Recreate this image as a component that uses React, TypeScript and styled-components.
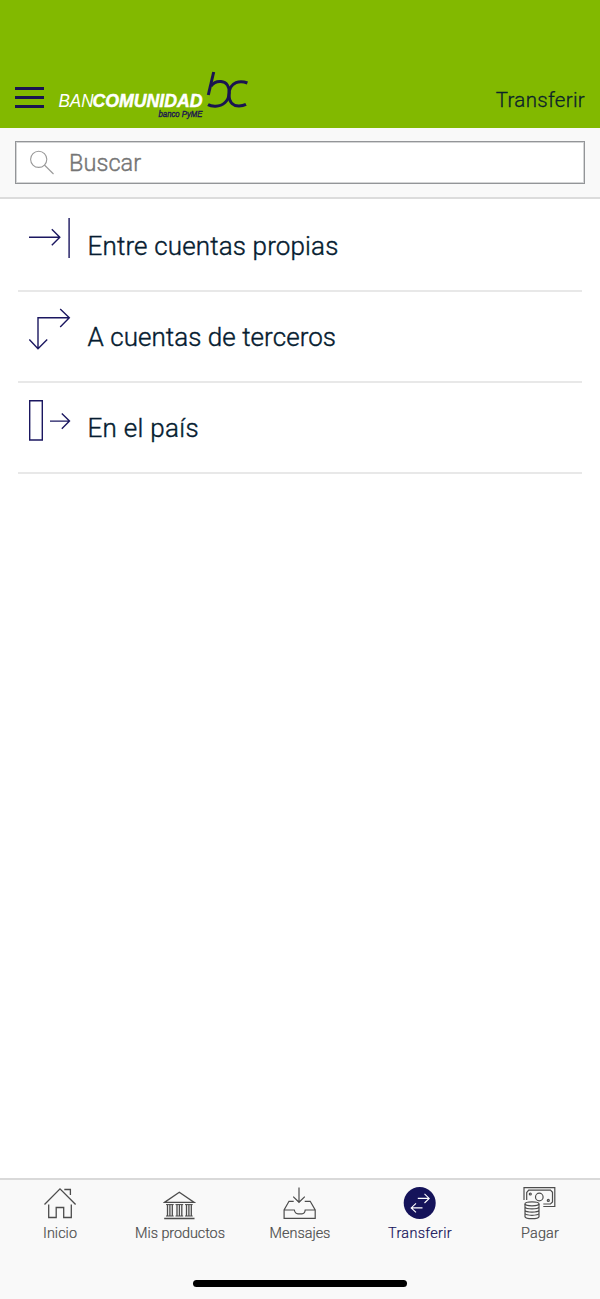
import React from 'react';
import styled, { createGlobalStyle } from 'styled-components';

const GlobalStyle = createGlobalStyle`
  * { box-sizing: border-box; }
  body {
    margin: 0;
    background: #fff;
    font-family: Roboto, "Liberation Sans", sans-serif;
    font-weight: 300;
  }
`;

const Screen = styled.div`
  display: flex;
  flex-direction: column;
  width: 600px;
  height: 1299px;
  background: #fff;
  overflow: hidden;
`;

const Header = styled.header`
  display: flex;
  justify-content: space-between;
  align-items: flex-end;
  height: 127.5px;
  padding: 0 15px 0 14px;
  background: #82b900;
`;

const Brand = styled.div`
  display: flex;
  align-items: flex-end;
  gap: 12px;
`;

const MenuButton = styled.button`
  display: flex;
  flex-direction: column;
  justify-content: space-between;
  width: 30px;
  height: 21px;
  margin: 0 0 19.5px;
  padding: 0 0 0 0.5px;
  border: 0;
  background: none;
`;

const MenuLine = styled.span`
  align-self: stretch;
  height: 3px;
  background: #1a1450;
`;

const Logo = styled.svg`
  display: block;
  margin-bottom: 5px;
`;

const Title = styled.h1`
  margin: 0 0 16px;
  color: #0b232b;
  font-size: 20.5px;
  font-weight: 300;
  line-height: 24px;
  letter-spacing: 0.3px;
  -webkit-text-stroke: 0.3px currentColor;
`;

const SearchArea = styled.div`
  height: 71.5px;
  padding: 13.5px 15px 0;
  background: #f9f9f9;
  border-bottom: 2px solid #dcdcdc;
`;

const SearchBox = styled.label`
  display: flex;
  align-items: center;
  gap: 14px;
  height: 43px;
  padding-left: 13px;
  background: #fff;
  border: 1px solid #939598;
  box-shadow: inset 0 0 0 1px rgba(147, 149, 152, 0.4);
`;

const SearchInput = styled.input`
  flex: 1;
  min-width: 0;
  padding: 1px 0 0;
  border: 0;
  outline: 0;
  background: transparent;
  font: 300 23.5px/30px Roboto, "Liberation Sans", sans-serif;
  letter-spacing: 0.05px;
  -webkit-text-stroke: 0.4px #757575;
  &::placeholder { color: #757575; opacity: 1; }
`;

const List = styled.ul`
  flex: 1;
  margin: 0;
  padding: 1.5px 18px 0;
  list-style: none;
`;

const Item = styled.li`
  display: flex;
  height: 91.1px;
  padding: 15.5px 0 0 10px;
  border-bottom: 2px solid #e8e8e8;
`;

const ItemLabel = styled.span<{ $spacing: number }>`
  margin: 15px 0 0 15.5px;
  color: #061c30;
  font-size: 26px;
  line-height: 30px;
  letter-spacing: ${(p) => p.$spacing}px;
  white-space: nowrap;
  -webkit-text-stroke: 0.4px currentColor;
`;

const LineIcon = styled.svg`
  display: block;
  flex: none;
  fill: none;
  stroke: currentColor;
`;

const TabBar = styled.nav`
  display: grid;
  grid-template-columns: repeat(5, 1fr);
  height: 83px;
  background: #f9f9f9;
  border-top: 2px solid #d9d9d9;
`;

const Tab = styled.a<{ $active?: boolean }>`
  display: flex;
  flex-direction: column;
  align-items: center;
  padding-top: 6px;
  color: ${(p) => (p.$active ? '#15135a' : '#4d4d4d')};
`;

const TabLabel = styled.span<{ $spacing: number }>`
  margin-top: 4px;
  font-size: 14.4px;
  line-height: 20px;
  letter-spacing: ${(p) => p.$spacing}px;
  white-space: nowrap;
  -webkit-text-stroke: 0.2px currentColor;
`;

const HomeArea = styled.div`
  display: flex;
  justify-content: center;
  height: 38px;
  padding-top: 19px;
  background: #f9f9f9;
`;

const HomeBar = styled.div`
  width: 214px;
  height: 7px;
  border-radius: 4px;
  background: #000;
`;

const BrandLogo = () => (
  <Logo width="194" height="54" viewBox="56 69 194 54" role="img" aria-label="Bancomunidad">
    <g fontFamily="Liberation Sans, sans-serif" fontStyle="italic">
      <text x="58.5" y="107.2" fontSize="18.2" fontWeight="400" fill="#fff" textLength="35" lengthAdjust="spacingAndGlyphs">BAN</text>
      <text x="92.5" y="107.2" fontSize="18.2" fontWeight="700" fill="#fff" stroke="#fff" strokeWidth="0.5" textLength="110" lengthAdjust="spacingAndGlyphs">COMUNIDAD</text>
      <text x="158.5" y="116.9" fontSize="8.4" fontWeight="400" fill="#1a1450" stroke="#1a1450" strokeWidth="0.35" textLength="44" lengthAdjust="spacingAndGlyphs">banco PyME</text>
    </g>
    <g fill="none" stroke="#1a1450" strokeWidth="3">
      <path d="M213.7 72 L208.3 95" />
      <path d="M211 86 C214 82 218 81.2 221 81.5 C227 82 229.4 87 229.2 93 C228.9 101 223 106 215.5 106.2 C212 106.3 209.8 105.7 208 104.6" />
      <path d="M247.4 83 C243.5 81.4 239.5 81.2 236 82.6 C231 84.8 228.8 90 228.9 95 C229.2 103.2 234 106.2 239 106.1 C242 106 244 105.4 246 104.4" />
    </g>
  </Logo>
);

const SearchIcon = () => (
  <LineIcon width="26" height="26" viewBox="0 0 26 26" color="#999" strokeWidth="1.1">
    <circle cx="9.7" cy="9.3" r="8.1" />
    <path d="M15.4 15 L24.5 24" />
  </LineIcon>
);

const OwnIcon = () => (
  <LineIcon width="44" height="44" viewBox="28 216 44 44" color="#1b1760" strokeWidth="1.4">
    <path d="M29 237.3H59.5M51.8 229.2L59.8 237.3L51.8 245.3M69.1 218V258" />
  </LineIcon>
);

const ThirdIcon = () => (
  <LineIcon width="44" height="44" viewBox="28 307.3 44 44" color="#1b1760" strokeWidth="1.4">
    <path d="M38 348.5V318H69M60.2 309.3L69.3 318L60.2 327.2M29.3 339.8L38 349L47.2 339.8" />
  </LineIcon>
);

const CountryIcon = () => (
  <LineIcon width="44" height="44" viewBox="28 398.2 44 44" color="#1b1760" strokeWidth="1.4">
    <path d="M29.7 401H42.3V440.2H29.7ZM50 421.3H69.3M61.8 413.8L69.5 421.3L61.8 429" />
  </LineIcon>
);

const HomeIcon = () => (
  <LineIcon width="34" height="34" viewBox="43 1186 34 34" strokeWidth="1.3">
    <path d="M44.5 1204.5L60 1188.8L75.6 1204.5M64.3 1189.5H70.4V1195M48.7 1204.5V1217.5H56.2V1207.5H63.7V1217.5H71.3V1204.5" />
  </LineIcon>
);

const BankIcon = () => (
  <LineIcon width="34" height="34" viewBox="163 1186 34 34" strokeWidth="1.3">
    <path d="M164.5 1202.4L179.3 1192.2L194.2 1202.4ZM164.2 1218.5H194.5" />
    <path d="M166 1204.6H173.7M175.5 1204.6H183.2M185 1204.6H192.7M166 1216H173.7M175.5 1216H183.2M185 1216H192.7" strokeWidth="1" />
    <path d="M167.5 1204.6V1216M169.9 1204.6V1216M172.3 1204.6V1216M177 1204.6V1216M179.4 1204.6V1216M181.8 1204.6V1216M186.5 1204.6V1216M188.9 1204.6V1216M191.3 1204.6V1216" strokeWidth="1.3" />
  </LineIcon>
);

const InboxIcon = () => (
  <LineIcon width="34" height="34" viewBox="283 1186 34 34" strokeWidth="1.2">
    <path d="M299 1187.5V1202M293.2 1196.6L299 1202.3L304.8 1196.6M293.7 1201.3H289L284.1 1210V1218.4H315.2V1210L310.2 1201.3H304.7M284.1 1210H294.3C295 1213.3 296 1213.8 298 1213.8H302C304 1213.8 304.8 1213.2 305.2 1210H315.2" />
  </LineIcon>
);

const TransferIcon = () => (
  <LineIcon width="34" height="34" viewBox="403 1186 34 34">
    <circle cx="419.7" cy="1203" r="16" fill="#15135a" stroke="none" />
    <path d="M417.8 1198.4H429M424.5 1193.8L429.2 1198.4L424.5 1203M422.5 1207.9H411.3M416 1203.3L411.2 1207.9L416 1212.4" stroke="#fff" strokeWidth="1.1" />
  </LineIcon>
);

const PayIcon = () => (
  <LineIcon width="34" height="34" viewBox="523 1186 34 34" strokeWidth="1.2">
    <path d="M524 1200V1187.7H554.8V1206.5H543.3M526.7 1200V1192.5L528.7 1190.2H550.5L552.5 1192.3V1202L550.5 1204H543.3" />
    <circle cx="539.3" cy="1197" r="3.8" />
    <circle cx="530.3" cy="1194" r="1" />
    <circle cx="548.3" cy="1200.4" r="1" />
    <ellipse cx="532" cy="1203.8" rx="7" ry="2" />
    <path d="M525 1204V1216.7C525.8 1219.3 538.2 1219.3 539 1216.7V1204M525 1207C526 1209.5 538 1209.5 539 1207M525 1210.2C526 1212.7 538 1212.7 539 1210.2M525 1213.4C526 1215.9 538 1215.9 539 1213.4" />
  </LineIcon>
);

const options = [
  { label: 'Entre cuentas propias', Icon: OwnIcon, spacing: 0.15 },
  { label: 'A cuentas de terceros', Icon: ThirdIcon, spacing: 0.05 },
  { label: 'En el país', Icon: CountryIcon, spacing: 0.3 },
];

const tabs = [
  { label: 'Inicio', Icon: HomeIcon, spacing: 0.05 },
  { label: 'Mis productos', Icon: BankIcon, spacing: -0.05 },
  { label: 'Mensajes', Icon: InboxIcon, spacing: 0 },
  { label: 'Transferir', Icon: TransferIcon, active: true, spacing: 0.35 },
  { label: 'Pagar', Icon: PayIcon, spacing: 0.15 },
];

export default function App() {
  return (
    <Screen>
      <GlobalStyle />
      <Header>
        <Brand>
          <MenuButton aria-label="Menú"><MenuLine /><MenuLine /><MenuLine /></MenuButton>
          <BrandLogo />
        </Brand>
        <Title>Transferir</Title>
      </Header>
      <SearchArea>
        <SearchBox>
          <SearchIcon />
          <SearchInput placeholder="Buscar" />
        </SearchBox>
      </SearchArea>
      <List>
        {options.map(({ label, Icon, spacing }) => (
          <Item key={label}>
            <Icon />
            <ItemLabel $spacing={spacing}>{label}</ItemLabel>
          </Item>
        ))}
      </List>
      <TabBar>
        {tabs.map(({ label, Icon, active, spacing }) => (
          <Tab key={label} $active={active}>
            <Icon />
            <TabLabel $spacing={spacing}>{label}</TabLabel>
          </Tab>
        ))}
      </TabBar>
      <HomeArea><HomeBar /></HomeArea>
    </Screen>
  );
}
